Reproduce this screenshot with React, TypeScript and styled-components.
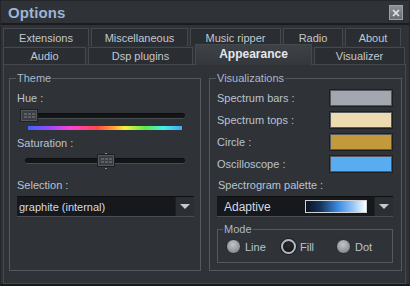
import styled, { createGlobalStyle } from 'styled-components';

const GlobalStyle = createGlobalStyle`
  body {
    margin: 0;
    background: #1c1e21;
    font-family: "Liberation Sans", Arial, sans-serif;
  }
`;

const Window = styled.div`
  width: 410px;
  height: 286px;
  box-sizing: border-box;
  background: #2f3237;
  border: 1px solid #24262a;
  border-bottom: 2px solid #18191c;
  display: flex;
  flex-direction: column;
  overflow: hidden;
`;

const TitleBar = styled.div`
  height: 22px;
  flex-shrink: 0;
  display: flex;
  align-items: center;
  justify-content: space-between;
  padding: 0 6px 0 7px;
  border-bottom: 2px solid #1a1c1f;
`;

const Title = styled.span`
  font-size: 15px;
  font-weight: 700;
  color: #9cb4d4;
  letter-spacing: 0.1px;
`;

const CloseButton = styled.div`
  width: 12px;
  height: 13px;
  border: 1px solid #9da1a7;
  background: linear-gradient(#8c9096, #6a6e74);
  display: flex;
  align-items: center;
  justify-content: center;
  margin-top: 1px;
`;

const Tabs = styled.div`
  padding: 3px 3px 0 2px;
  display: flex;
  flex-direction: column;
  gap: 1px;
`;

const TabRow = styled.div`
  display: flex;
  gap: 2px;
  height: 17px;
  &:first-child {
    height: 18px;
  }
`;

const Tab = styled.div<{ w: number; active?: boolean }>`
  width: ${p => p.w}px;
  box-sizing: border-box;
  flex-shrink: 0;
  border: 1px solid #45484d;
  border-bottom: none;
  background: ${p => (p.active ? 'linear-gradient(#3e4146, #34373c)' : '#2a2d31')};
  color: ${p => (p.active ? '#e4e8ee' : '#c2c8d0')};
  font-size: ${p => (p.active ? '12px' : '11px')};
  font-weight: ${p => (p.active ? 700 : 400)};
  display: flex;
  align-items: center;
  justify-content: center;
  position: relative;
  z-index: ${p => (p.active ? 2 : 0)};
  margin-top: ${p => (p.active ? '-3px' : '0')};
  height: ${p => (p.active ? '21px' : 'auto')};
  padding-bottom: ${p => (p.active ? '2px' : '0')};
`;

const Panel = styled.div`
  flex: 1;
  margin: 0 3px 0 2px;
  border: 1px solid #45484d;
  background: #2f3237;
  padding: 6px 4px 12px 5px;
  display: grid;
  grid-template-columns: 192px 193px;
  gap: 8px;
  position: relative;
  z-index: 1;
`;

const Group = styled.fieldset<{ pl?: number; pr?: number }>`
  margin: 0;
  padding: 0 ${p => p.pr ?? 6}px 0 ${p => p.pl ?? 6}px;
  min-width: 0;
  border: 1px solid #55585d;
  display: flex;
  flex-direction: column;
`;

const Legend = styled.legend<{ ml?: number }>`
  padding: 0 1px;
  margin-left: ${p => p.ml ?? 0}px;
  font-size: 11px;
  line-height: 14px;
  color: #aab8cc;
`;

const Label = styled.div<{ mt: number }>`
  margin-top: ${p => p.mt}px;
  font-size: 11px;
  line-height: 14px;
  color: #b9c3d2;
  padding-left: 1px;
`;

const Slider = styled.div<{ mt: number }>`
  margin-top: ${p => p.mt}px;
  height: 14px;
  position: relative;
  display: flex;
  align-items: center;
  padding-left: 9px;
`;

const Track = styled.div`
  width: 160px;
  height: 6px;
  box-sizing: border-box;
  border-radius: 3px;
  background: #131517;
  border-top: 1px solid #0c0d0f;
  border-bottom: 1px solid #4a4d52;
`;

const Thumb = styled.div<{ left: number }>`
  position: absolute;
  top: 0;
  left: ${p => p.left}px;
  width: 18px;
  height: 13px;
  box-sizing: border-box;
  background: #3b3e43;
  border: 1px solid #1d1f22;
  box-shadow: inset 0 0 0 1px #55585d;
  display: grid;
  grid-template-columns: repeat(3, 3px);
  grid-template-rows: repeat(2, 2px);
  gap: 1px;
  place-content: center;
`;

const Grip = styled.span`
  background: #5c6066;
`;

const Tick = styled.span<{ bottom?: boolean }>`
  position: absolute;
  left: 7px;
  width: 2px;
  height: 1px;
  background: #8a8e94;
  ${p => (p.bottom ? 'bottom: -3px;' : 'top: -2px;')}
`;

const HueBar = styled.div`
  margin: 3px 0 0 12px;
  width: 154px;
  height: 4px;
  background: linear-gradient(
    90deg,
    #3e64ff 0%,
    #9a48ff 14%,
    #ff44d4 28%,
    #ff4a4a 45%,
    #ffa030 55%,
    #f4f040 63%,
    #58ee48 76%,
    #44f0e8 88%,
    #44a6ff 100%
  );
`;

const Select = styled.div<{ mt: number; w: number; ml?: number }>`
  margin-top: ${p => p.mt}px;
  margin-left: ${p => p.ml ?? 0}px;
  width: ${p => p.w}px;
  height: 21px;
  box-sizing: border-box;
  display: flex;
  background: #16181b;
  border-top: 1px solid #0e0f11;
  border-bottom: 1px solid #4a4d52;
`;

const SelectText = styled.div<{ big?: boolean }>`
  flex: 1;
  display: flex;
  align-items: center;
  padding-left: ${p => (p.big ? 7 : 2)}px;
  font-size: ${p => (p.big ? 12 : 11)}px;
  color: #d2dae6;
`;

const SelectButton = styled.div`
  width: 18px;
  flex-shrink: 0;
  background: #2b2e32;
  border-left: 1px solid #1d1f22;
  display: flex;
  align-items: center;
  justify-content: center;
`;

const Arrow = styled.span`
  width: 0;
  height: 0;
  border-left: 5px solid transparent;
  border-right: 5px solid transparent;
  border-top: 5px solid #c6cad0;
`;

const ColorRows = styled.div`
  margin-top: 4px;
  display: flex;
  flex-direction: column;
  gap: 4px;
`;

const ColorRow = styled.div`
  display: flex;
  align-items: center;
  justify-content: space-between;
  height: 18px;
  font-size: 11px;
  color: #b9c3d2;
`;

const Swatch = styled.div<{ color: string }>`
  width: 64px;
  height: 18px;
  box-sizing: border-box;
  background: ${p => p.color};
  border: 1px solid #1d1f22;
  box-shadow: 0 0 0 1px #55585d inset;
`;

const Palette = styled.div`
  width: 62px;
  height: 13px;
  box-sizing: border-box;
  margin-right: 7px;
  align-self: center;
  border: 1px solid #cfd3d8;
  background: linear-gradient(90deg, #0a1322 0%, #17355e 25%, #3f8fe6 55%, #9ccaf6 80%, #ffffff 100%);
`;

const ModeGroup = styled.fieldset`
  margin: 5px 0 0 0;
  padding: 0 0 0 8px;
  min-width: 0;
  height: 41px;
  box-sizing: border-box;
  border: 1px solid #55585d;
`;

const RadioRow = styled.div`
  margin-top: 3px;
  display: flex;
`;

const RadioItem = styled.label`
  width: 55px;
  display: flex;
  align-items: center;
  gap: 4px;
  font-size: 11px;
  color: #b9c3d2;
`;

const RadioDot = styled.span<{ checked?: boolean }>`
  width: 15px;
  height: 15px;
  box-sizing: border-box;
  border-radius: 50%;
  flex-shrink: 0;
  ${p =>
    p.checked
      ? `border: 2px solid #b4b8be;
         background: radial-gradient(circle at 50% 40%, #2a2c30, #0e0f11);
         box-shadow: 0 0 0 1px #1d1f22;`
      : `border: 1px solid #2a2c30;
         background: radial-gradient(circle at 45% 35%, #c2c6cc, #8a8e95 70%, #74787e);`}
`;

const tabsTop = [
  { label: 'Extensions', w: 86 },
  { label: 'Miscellaneous', w: 97 },
  { label: 'Music ripper', w: 91 },
  { label: 'Radio', w: 60 },
  { label: 'About', w: 56 },
];

const tabsBottom = [
  { label: 'Audio', w: 83 },
  { label: 'Dsp plugins', w: 105 },
  { label: 'Appearance', w: 117, active: true },
  { label: 'Visualizer', w: 91 },
];

const colors = [
  { label: 'Spectrum bars :', color: '#a3a8b0' },
  { label: 'Spectrum tops :', color: '#ecdbb0' },
  { label: 'Circle :', color: '#c29a3b' },
  { label: 'Oscilloscope :', color: '#58adf2' },
];

const ThumbGrips = () => (
  <>
    {Array.from({ length: 6 }).map((_, i) => (
      <Grip key={i} />
    ))}
  </>
);

export default function App() {
  return (
    <>
      <GlobalStyle />
      <Window>
        <TitleBar>
          <Title>Options</Title>
          <CloseButton>
            <svg width="8" height="8" viewBox="0 0 8 8">
              <path d="M1 1L7 7M7 1L1 7" stroke="#e4e7ea" strokeWidth="1.6" />
            </svg>
          </CloseButton>
        </TitleBar>

        <Tabs>
          <TabRow>
            {tabsTop.map(t => (
              <Tab key={t.label} w={t.w}>{t.label}</Tab>
            ))}
          </TabRow>
          <TabRow>
            {tabsBottom.map(t => (
              <Tab key={t.label} w={t.w} active={t.active}>{t.label}</Tab>
            ))}
          </TabRow>
        </Tabs>

        <Panel>
          <Group>
            <Legend>Theme</Legend>
            <Label mt={6}>Hue :</Label>
            <Slider mt={4}>
              <Track />
              <Thumb left={4}>
                <ThumbGrips />
              </Thumb>
            </Slider>
            <HueBar />
            <Label mt={6}>Saturation :</Label>
            <Slider mt={4}>
              <Track />
              <Thumb left={81}>
                <ThumbGrips />
                <Tick />
                <Tick bottom />
              </Thumb>
            </Slider>
            <Label mt={10}>Selection :</Label>
            <Select mt={4} w={177} ml={1}>
              <SelectText>graphite (internal)</SelectText>
              <SelectButton>
                <Arrow />
              </SelectButton>
            </Select>
          </Group>

          <Group pl={7} pr={8}>
            <Legend ml={-1}>Visualizations</Legend>
            <ColorRows>
              {colors.map(c => (
                <ColorRow key={c.label}>
                  <span>{c.label}</span>
                  <Swatch color={c.color} />
                </ColorRow>
              ))}
            </ColorRows>
            <Label mt={5}>Spectrogram palette :</Label>
            <Select mt={4} w={176}>
              <SelectText big>Adaptive</SelectText>
              <Palette />
              <SelectButton>
                <Arrow />
              </SelectButton>
            </Select>
            <ModeGroup>
              <Legend ml={-3}>Mode</Legend>
              <RadioRow>
                <RadioItem>
                  <RadioDot />
                  Line
                </RadioItem>
                <RadioItem>
                  <RadioDot checked />
                  Fill
                </RadioItem>
                <RadioItem>
                  <RadioDot />
                  Dot
                </RadioItem>
              </RadioRow>
            </ModeGroup>
          </Group>
        </Panel>
      </Window>
    </>
  );
}
